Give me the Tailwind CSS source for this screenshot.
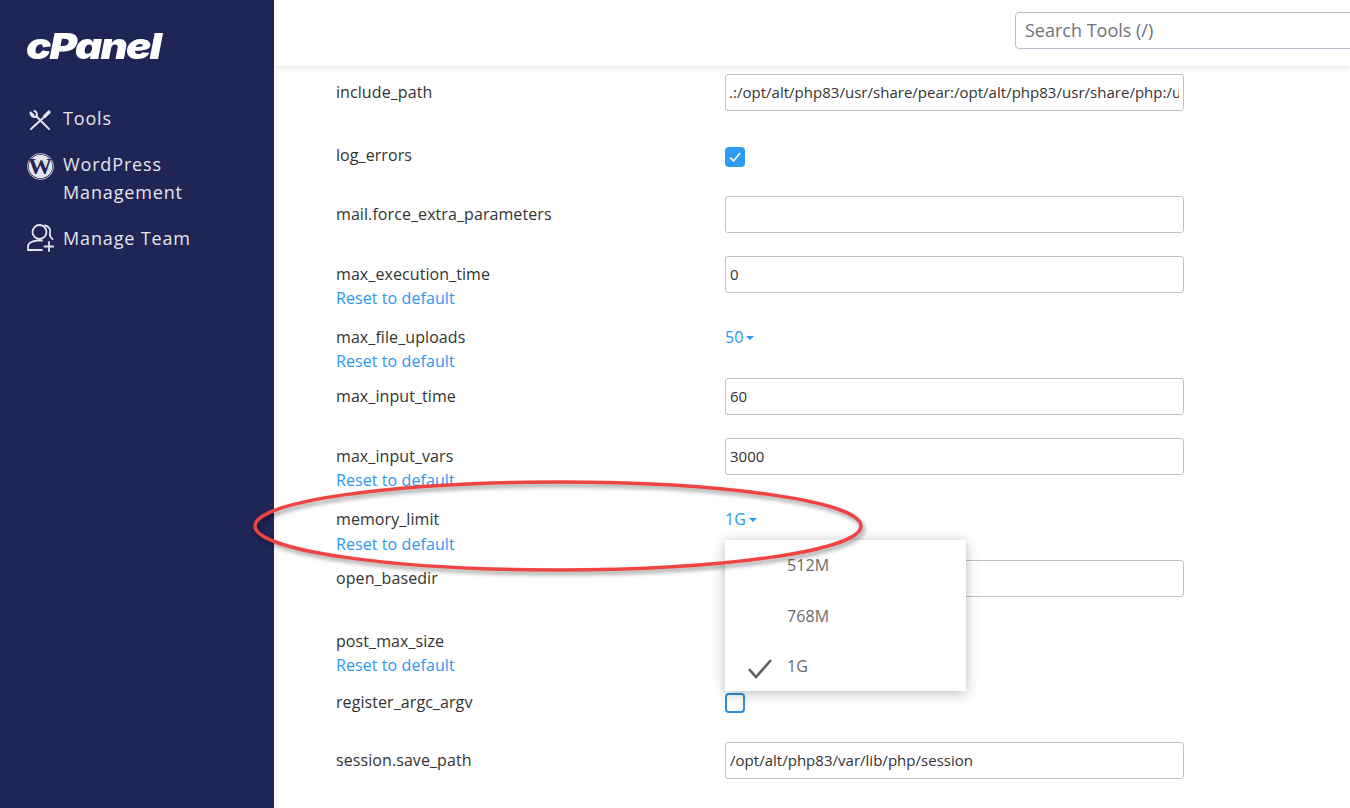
<!DOCTYPE html>
<html lang="en">
<head>
    <meta charset="UTF-8">
    <title>cPanel - MultiPHP INI Editor</title>
    <script src="https://cdn.jsdelivr.net/npm/@tailwindcss/browser@4"></script>
</head>
<body class="bg-white font-['Open_Sans',sans-serif] text-[16px] tracking-[0.08px] text-[#333] h-[808px] overflow-hidden">
    <div class="relative flex h-[808px] overflow-hidden">
        <!-- sidebar -->
        <aside class="w-[274px] shrink-0 bg-[#1f2555] text-[#e3e6ee] text-[18px] tracking-[0.85px]">
            <div class="h-[100px] pl-[26px] pt-[24px] text-white">
                <span class="inline-block origin-left scale-x-[1.17] font-['Inter',sans-serif] font-black italic text-[36px] leading-[44px] tracking-[-1.5px]">cPanel</span>
            </div>
            <a class="flex items-center h-[36px] pl-[27px] gap-[10px]">
                <svg class="w-[26px] h-[26px]" viewBox="0 0 26 26" fill="none" stroke="currentColor" stroke-width="2" stroke-linecap="round">
                    <path d="M4 24 L16 13"/>
                    <path d="M17.5 11.5 L22 7" stroke-width="3.2"/>
                    <path d="M22 24 L9.5 11.5"/>
                    <path d="M3.5 7.5 L6.5 10 M3.5 7.5 C3.5 11 6.5 13 9.5 11.5 C10.5 9 9.5 6.5 7.5 6"/>
                </svg>
                <span>Tools</span>
            </a>
            <a class="flex items-start pl-[27px] gap-[9px] mt-[14px]">
                <svg class="w-[27px] h-[27px] shrink-0 mt-[3px]" viewBox="0 0 27 27">
                    <circle cx="13.5" cy="13.5" r="13" fill="none" stroke="currentColor" stroke-width="0.8"/>
                    <circle cx="13.5" cy="13.5" r="11.8" fill="currentColor"/>
                    <text x="13.5" y="21" text-anchor="middle" font-family="Liberation Serif" font-weight="700" font-size="24" fill="#1f2555">W</text>
                </svg>
                <span class="leading-[28px]">WordPress<br>Management</span>
            </a>
            <a class="flex items-center h-[36px] pl-[27px] gap-[9px] mt-[14px]">
                <svg class="w-[27px] h-[28px]" viewBox="0 0 27 28" fill="none" stroke="currentColor" stroke-width="1.8" stroke-linecap="round">
                    <circle cx="12.5" cy="8" r="7"/>
                    <path d="M1 26 V22.5 C1 19 6 17 10 16.5 H15 M1 26 H15"/>
                    <path d="M18 1.5 C22 2 24 6 23 9 C22.5 11 23 13 25.5 15"/>
                    <path d="M22 18 V27 M17.5 22.5 H26.5"/>
                </svg>
                <span>Manage Team</span>
            </a>
        </aside>

        <main class="flex-1 min-w-0">
            <!-- top bar -->
            <header class="h-[66px] pt-[12px] pl-[741px] shadow-[0_1px_6px_rgba(0,0,0,0.12)] bg-white">
                <input placeholder="Search Tools (/)" class="w-[400px] h-[37px] pl-[9px] pb-[2px] text-[18px] tracking-normal border border-[#b9bccd] rounded-[4px] placeholder:text-[#6f7278] outline-none">
            </header>

            <!-- settings list -->
            <div class="pt-[8px] pl-[62px]">
                <div class="grid grid-cols-[389px_459px] h-[63px]">
                    <div class="leading-[36px]">include_path</div>
                    <input value=".:/opt/alt/php83/usr/share/pear:/opt/alt/php83/usr/share/php:/usr/share/php" class="h-[37px] pl-[3px] pr-[4px] pb-[2px] border border-[#c2c2c2] rounded-[3px] text-[15px] tracking-[0.02px] text-[#333]">
                </div>
                <div class="grid grid-cols-[389px_459px] h-[59px]">
                    <div class="leading-[36px]">log_errors</div>
                    <div class="pt-[10px]"><span class="flex items-center justify-center w-[20px] h-[20px] rounded-[4px] bg-[#2e9bf0]">
                        <svg class="w-[14px] h-[14px]" viewBox="0 0 14 14" fill="none" stroke="white" stroke-width="1.6"><path d="M2 7.5 L5.5 11 L12 3"/></svg>
                    </span></div>
                </div>
                <div class="grid grid-cols-[389px_459px] h-[60px]">
                    <div class="leading-[36px]">mail.force_extra_parameters</div>
                    <input class="h-[37px] px-[4px] pb-[2px] border border-[#c2c2c2] rounded-[3px]">
                </div>
                <div class="grid grid-cols-[389px_459px] h-[63px]">
                    <div class="leading-[36px]">max_execution_time<a class="block leading-[12px] text-[#2e96f0]">Reset to default</a></div>
                    <input value="0" class="h-[37px] px-[4px] pb-[2px] border border-[#c2c2c2] rounded-[3px] text-[15px] tracking-[0.02px] text-[#333]">
                </div>
                <div class="grid grid-cols-[389px_459px] h-[59px]">
                    <div class="leading-[36px]">max_file_uploads<a class="block leading-[12px] text-[#2e96f0]">Reset to default</a></div>
                    <div class="text-[#2e96f0] flex items-center h-[36px] gap-[3px]">50<span class="w-0 h-0 border-x-[4px] border-x-transparent border-t-[4px] border-t-[#2e96f0] mt-[2px]"></span></div>
                </div>
                <div class="grid grid-cols-[389px_459px] h-[60px]">
                    <div class="leading-[36px]">max_input_time</div>
                    <input value="60" class="h-[37px] px-[4px] pb-[2px] border border-[#c2c2c2] rounded-[3px] text-[15px] tracking-[0.02px] text-[#333]">
                </div>
                <div class="grid grid-cols-[389px_459px] h-[63px]">
                    <div class="leading-[36px]">max_input_vars<a class="block leading-[12px] text-[#2e96f0]">Reset to default</a></div>
                    <input value="3000" class="h-[37px] px-[4px] pb-[2px] border border-[#c2c2c2] rounded-[3px] text-[15px] tracking-[0.02px] text-[#333]">
                </div>
                <div class="grid grid-cols-[389px_459px] h-[59px]">
                    <div class="leading-[36px]">memory_limit<a class="block leading-[14px] text-[#2e96f0]">Reset to default</a></div>
                    <div class="text-[#2e96f0] flex items-center h-[36px] gap-[3px]">1G<span class="w-0 h-0 border-x-[4px] border-x-transparent border-t-[4px] border-t-[#2e96f0] mt-[2px]"></span></div>
                </div>
                <div class="grid grid-cols-[389px_459px] h-[63px]">
                    <div class="leading-[36px]">open_basedir</div>
                    <input class="h-[37px] px-[4px] pb-[2px] border border-[#c2c2c2] rounded-[3px]">
                </div>
                <div class="grid grid-cols-[389px_459px] h-[61px]">
                    <div class="leading-[36px]">post_max_size<a class="block leading-[12px] text-[#2e96f0]">Reset to default</a></div>
                    <div></div>
                </div>
                <div class="grid grid-cols-[389px_459px] h-[58px]">
                    <div class="leading-[36px]">register_argc_argv</div>
                    <div class="pt-[9px]"><span class="block w-[20px] h-[20px] rounded-[4px] border-2 border-[#2e8fe0]"></span></div>
                </div>
                <div class="grid grid-cols-[389px_459px]">
                    <div class="leading-[36px]">session.save_path</div>
                    <input value="/opt/alt/php83/var/lib/php/session" class="h-[37px] px-[4px] pb-[2px] border border-[#c2c2c2] rounded-[3px] text-[15px] tracking-[0.02px] text-[#333]">
                </div>
            </div>
        </main>

        <!-- open dropdown -->
        <div class="absolute left-[725px] top-[540px] w-[241px] h-[151px] bg-white shadow-[0_2px_12px_rgba(0,0,0,0.28)] text-[#6a6a6a]">
            <div class="h-[50px] pl-[62px] leading-[50px]">512M</div>
            <div class="h-[51px] pl-[62px] leading-[53px]">768M</div>
            <div class="relative h-[50px] pl-[62px] leading-[50px]">
                <svg class="absolute left-[22px] top-[16px] w-[26px] h-[24px]" viewBox="0 0 26 24" fill="none" stroke="#5f5f5f" stroke-width="2.6"><path d="M2 12 L9 20 L24 3"/></svg>
                1G
            </div>
        </div>

        <!-- red annotation -->
        <svg class="absolute left-[240px] top-[470px] w-[640px] h-[115px] pointer-events-none drop-shadow-[2px_3px_2px_rgba(0,0,0,0.4)]" viewBox="0 0 640 115" fill="none">
            <ellipse cx="318" cy="56" rx="303" ry="44" stroke="#f04444" stroke-width="3.5"/>
        </svg>
    </div>
</body>
</html>
